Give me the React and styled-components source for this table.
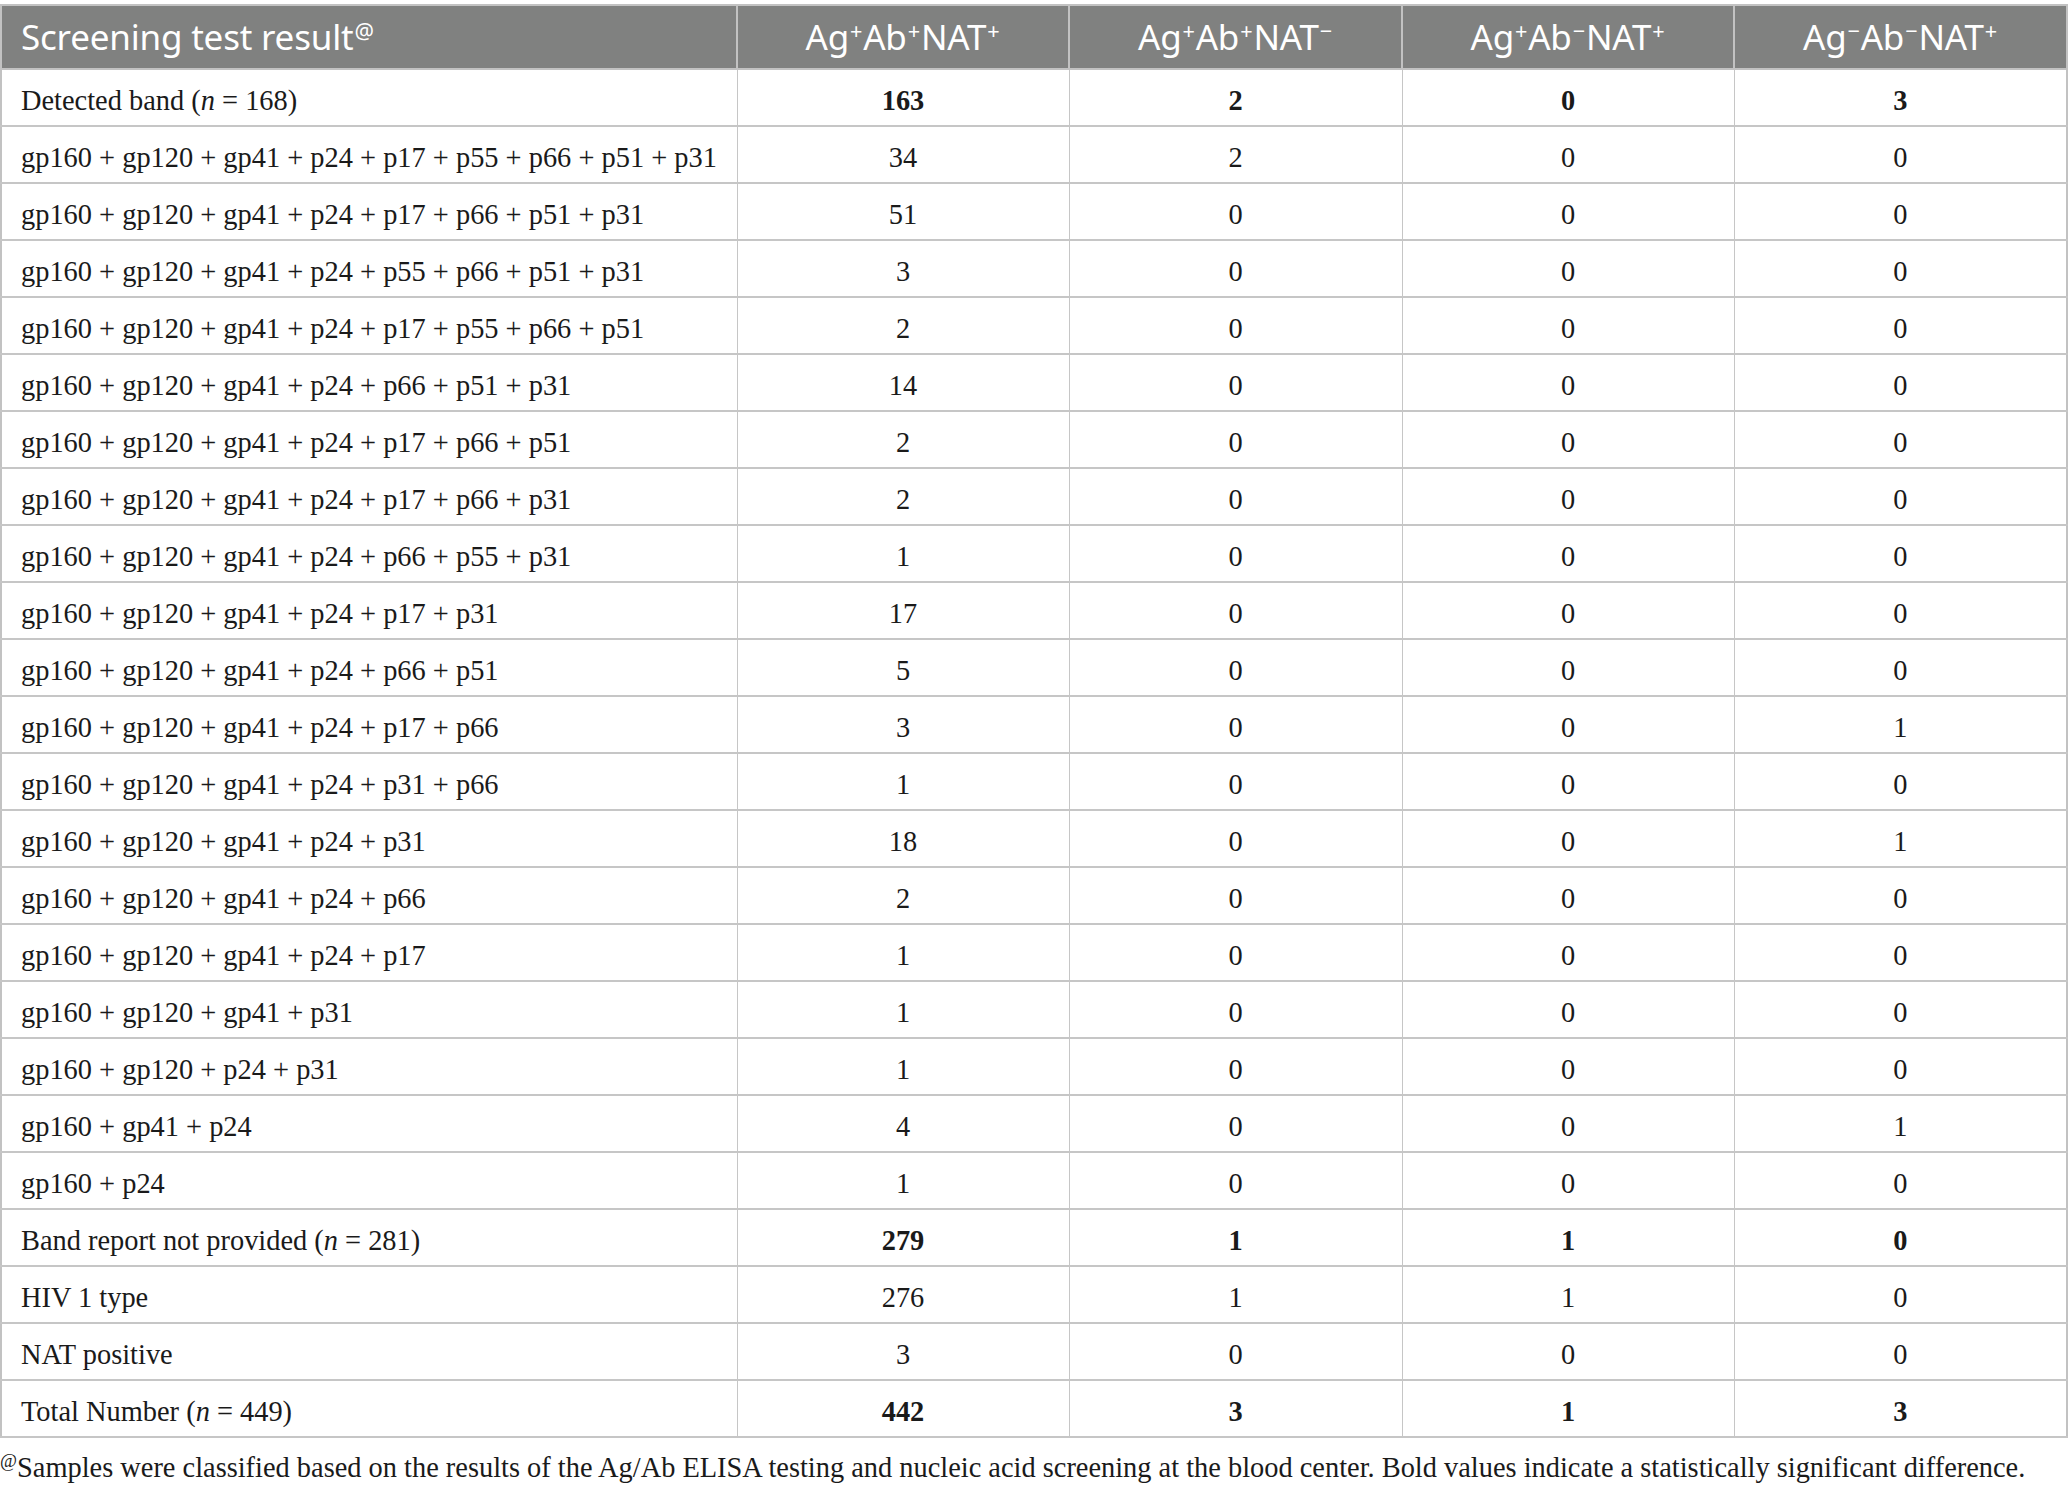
import React from "react";
import styled, { createGlobalStyle } from "styled-components";

const GlobalStyle = createGlobalStyle`
  html, body {
    margin: 0;
    padding: 0;
    background: #ffffff;
  }
`;

const Page = styled.div`
  width: 2068px;
  padding-top: 4px;
`;

const Table = styled.table`
  width: 2068px;
  border-collapse: collapse;
  table-layout: fixed;
  font-family: "Liberation Serif", "Times New Roman", serif;
  color: #1a1a1a;
`;

const HeadCell = styled.th`
  background: #808180;
  color: #ffffff;
  font-family: "Noto Sans", "Open Sans", sans-serif;
  font-weight: 400;
  font-size: 35px;
  letter-spacing: -0.2px;
  height: 64px;
  padding: 0 0 2px ${(p) => (p.$left ? "19px" : "0")};
  text-align: ${(p) => (p.$left ? "left" : "center")};
  border: 2px solid #c2c2c2;
  box-sizing: border-box;

  sup {
    font-size: 0.62em;
    vertical-align: 0.5em;
    line-height: 0;
    padding: 0 1px;
  }
`;

const Row = styled.tr`
  height: 57px;
`;

const Cell = styled.td`
  font-size: 28.4px;
  padding: 6px 0 0 ${(p) => (p.$left ? "19px" : "0")};
  text-align: ${(p) => (p.$left ? "left" : "center")};
  font-weight: ${(p) => (p.$bold ? 700 : 400)};
  border-top: 2px solid #c6c6c6;
  border-bottom: 2px solid #c6c6c6;
  border-left: 1px solid #c6c6c6;
  border-right: 1px solid #c6c6c6;
  white-space: nowrap;

  &:first-child {
    border-left: 2px solid #c2c2c2;
  }
  &:last-child {
    border-right: 2px solid #c2c2c2;
  }
`;

const Footnote = styled.p`
  margin: 14px 0 0 0;
  font-family: "Liberation Serif", "Times New Roman", serif;
  font-size: 28.4px;
  line-height: 1.1;
  color: #1a1a1a;
  white-space: nowrap;

  sup {
    font-size: 0.65em;
    vertical-align: 0.55em;
    line-height: 0;
  }
`;

const Sign = ({ s }) => <sup>{s === "+" ? "+" : "\u2212"}</sup>;

const Group = ({ ag, ab, nat }) => (
  <>
    Ag<Sign s={ag} />Ab<Sign s={ab} />NAT<Sign s={nat} />
  </>
);

const rows = [
  { label: <>Detected band (<i>n</i> = 168)</>, v: [163, 2, 0, 3], bold: true },
  { label: "gp160 + gp120 + gp41 + p24 + p17 + p55 + p66 + p51 + p31", v: [34, 2, 0, 0] },
  { label: "gp160 + gp120 + gp41 + p24 + p17 + p66 + p51 + p31", v: [51, 0, 0, 0] },
  { label: "gp160 + gp120 + gp41 + p24 + p55 + p66 + p51 + p31", v: [3, 0, 0, 0] },
  { label: "gp160 + gp120 + gp41 + p24 + p17 + p55 + p66 + p51", v: [2, 0, 0, 0] },
  { label: "gp160 + gp120 + gp41 + p24 + p66 + p51 + p31", v: [14, 0, 0, 0] },
  { label: "gp160 + gp120 + gp41 + p24 + p17 + p66 + p51", v: [2, 0, 0, 0] },
  { label: "gp160 + gp120 + gp41 + p24 + p17 + p66 + p31", v: [2, 0, 0, 0] },
  { label: "gp160 + gp120 + gp41 + p24 + p66 + p55 + p31", v: [1, 0, 0, 0] },
  { label: "gp160 + gp120 + gp41 + p24 + p17 + p31", v: [17, 0, 0, 0] },
  { label: "gp160 + gp120 + gp41 + p24 + p66 + p51", v: [5, 0, 0, 0] },
  { label: "gp160 + gp120 + gp41 + p24 + p17 + p66", v: [3, 0, 0, 1] },
  { label: "gp160 + gp120 + gp41 + p24 + p31 + p66", v: [1, 0, 0, 0] },
  { label: "gp160 + gp120 + gp41 + p24 + p31", v: [18, 0, 0, 1] },
  { label: "gp160 + gp120 + gp41 + p24 + p66", v: [2, 0, 0, 0] },
  { label: "gp160 + gp120 + gp41 + p24 + p17", v: [1, 0, 0, 0] },
  { label: "gp160 + gp120 + gp41 + p31", v: [1, 0, 0, 0] },
  { label: "gp160 + gp120 + p24 + p31", v: [1, 0, 0, 0] },
  { label: "gp160 + gp41 + p24", v: [4, 0, 0, 1] },
  { label: "gp160 + p24", v: [1, 0, 0, 0] },
  { label: <>Band report not provided (<i>n</i> = 281)</>, v: [279, 1, 1, 0], bold: true },
  { label: "HIV 1 type", v: [276, 1, 1, 0] },
  { label: "NAT positive", v: [3, 0, 0, 0] },
  { label: <>Total Number (<i>n</i> = 449)</>, v: [442, 3, 1, 3], bold: true },
];

export default function App() {
  return (
    <Page>
      <GlobalStyle />
      <Table>
        <colgroup>
          <col style={{ width: "736px" }} />
          <col style={{ width: "332px" }} />
          <col style={{ width: "333px" }} />
          <col style={{ width: "332px" }} />
          <col />
        </colgroup>
        <thead>
          <tr>
            <HeadCell $left>
              Screening test result<sup>@</sup>
            </HeadCell>
            <HeadCell><Group ag="+" ab="+" nat="+" /></HeadCell>
            <HeadCell><Group ag="+" ab="+" nat="-" /></HeadCell>
            <HeadCell><Group ag="+" ab="-" nat="+" /></HeadCell>
            <HeadCell><Group ag="-" ab="-" nat="+" /></HeadCell>
          </tr>
        </thead>
        <tbody>
          {rows.map((r, i) => (
            <Row key={i}>
              <Cell $left>{r.label}</Cell>
              {r.v.map((n, j) => (
                <Cell key={j} $bold={r.bold}>{n}</Cell>
              ))}
            </Row>
          ))}
        </tbody>
      </Table>
      <Footnote>
        <sup>@</sup>Samples were classified based on the results of the Ag/Ab ELISA testing and nucleic acid screening at the blood center. Bold values indicate a statistically significant difference.
      </Footnote>
    </Page>
  );
}
